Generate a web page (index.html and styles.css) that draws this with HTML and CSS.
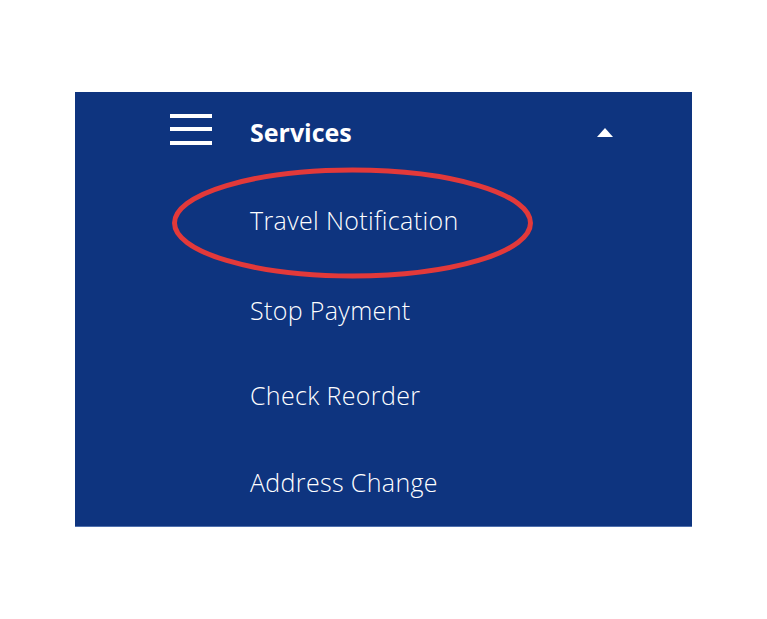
FILE: index.html
```html
<!DOCTYPE html>
<html lang="en">
<head>
<meta charset="utf-8">
<title>Services menu</title>
<link rel="stylesheet" href="styles.css">
</head>
<body>
<nav class="panel">
  <div class="header">
    <svg class="hamburger" width="42" height="31" viewBox="0 0 42 31" aria-hidden="true">
      <rect x="0" y="0" width="42" height="4" fill="#fff"/>
      <rect x="0" y="13" width="42" height="4" fill="#fff"/>
      <rect x="0" y="27" width="42" height="4" fill="#fff"/>
    </svg>
    <span class="title">Services</span>
    <span class="caret"></span>
  </div>
  <ul class="items">
    <li class="item">Travel Notification</li>
    <li class="item item-stop">Stop Payment</li>
    <li class="item">Check Reorder</li>
    <li class="item item-address">Address Change</li>
  </ul>
  <svg class="highlight" width="361" height="112" viewBox="0 0 361 112" aria-hidden="true">
    <ellipse cx="180.5" cy="56" rx="178" ry="53" fill="none" stroke="#e2393a" stroke-width="5"/>
  </svg>
</nav>
</body>
</html>
```
FILE: styles.css
```css
html, body {
  margin: 0;
  padding: 0;
  background: #ffffff;
}
body {
  font-family: "Open Sans", "Noto Sans", sans-serif;
  padding-top: 92px;
  padding-left: 75px;
}
.panel {
  position: relative;
  box-sizing: border-box;
  width: 617px;
  height: 435px;
  background: #0e347f;
  border-bottom: 1px solid #4f70ad;
  color: #ffffff;
}
.header {
  display: flex;
  align-items: flex-start;
  padding: 20px 79px 0 95px;
  height: 40px;
}
.hamburger {
  display: block;
  margin-top: 2px;
  flex: none;
}
.title {
  margin-left: 38px;
  font-size: 25px;
  font-weight: 700;
  line-height: 40px;
}
.caret {
  margin-left: auto;
  margin-top: 16px;
  width: 0;
  height: 0;
  border-left: 8.5px solid transparent;
  border-right: 8.5px solid transparent;
  border-bottom: 9px solid #ffffff;
}
.items {
  list-style: none;
  margin: 0;
  padding: 48px 0 0 175px;
  display: flex;
  flex-direction: column;
}
.item {
  font-size: 25px;
  font-weight: 350;
  line-height: 40px;
  height: 40px;
  letter-spacing: 0.35px;
  margin-bottom: 47px;
}
.item-stop {
  margin-top: 3px;
  margin-bottom: 45px;
}
.highlight {
  position: absolute;
  left: 97px;
  top: 75px;
}
```
